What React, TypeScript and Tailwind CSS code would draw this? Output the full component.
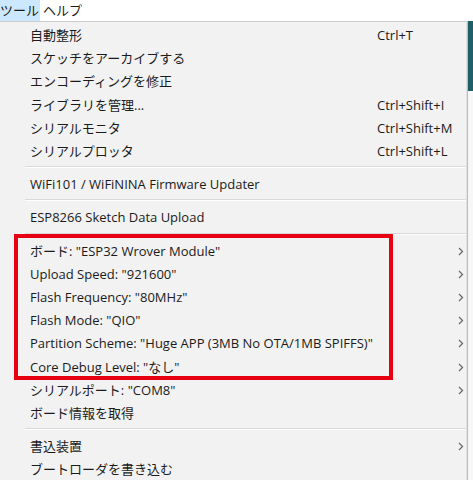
import React from 'react';

type Row =
  | { kind: 'item'; label: string; shortcut?: string; sub?: boolean }
  | { kind: 'sep' };

const topRows: Row[] = [
  { kind: 'item', label: '自動整形', shortcut: 'Ctrl+T' },
  { kind: 'item', label: 'スケッチをアーカイブする' },
  { kind: 'item', label: 'エンコーディングを修正' },
  { kind: 'item', label: 'ライブラリを管理...', shortcut: 'Ctrl+Shift+I' },
  { kind: 'item', label: 'シリアルモニタ', shortcut: 'Ctrl+Shift+M' },
  { kind: 'item', label: 'シリアルプロッタ', shortcut: 'Ctrl+Shift+L' },
  { kind: 'sep' },
  { kind: 'item', label: 'WiFi101 / WiFiNINA Firmware Updater' },
  { kind: 'sep' },
  { kind: 'item', label: 'ESP8266 Sketch Data Upload' },
  { kind: 'sep' },
];

const boardRows: Row[] = [
  { kind: 'item', label: 'ボード: "ESP32 Wrover Module"', sub: true },
  { kind: 'item', label: 'Upload Speed: "921600"', sub: true },
  { kind: 'item', label: 'Flash Frequency: "80MHz"', sub: true },
  { kind: 'item', label: 'Flash Mode: "QIO"', sub: true },
  { kind: 'item', label: 'Partition Scheme: "Huge APP (3MB No OTA/1MB SPIFFS)"', sub: true },
  { kind: 'item', label: 'Core Debug Level: "なし"', sub: true },
];

const bottomRows: Row[] = [
  { kind: 'item', label: 'シリアルポート: "COM8"', sub: true },
  { kind: 'item', label: 'ボード情報を取得' },
  { kind: 'sep' },
  { kind: 'item', label: '書込装置', sub: true },
  { kind: 'item', label: 'ブートローダを書き込む' },
];

function Chevron() {
  return (
    <svg width="6" height="9" viewBox="0 0 6 9" className="text-[#6b6b6b]">
      <path d="M1 1l3.5 3.5L1 8" fill="none" stroke="currentColor" strokeWidth="1.3" />
    </svg>
  );
}

function MenuRows({ rows }: { rows: Row[] }) {
  return (
    <>
      {rows.map((row, i) =>
        row.kind === 'sep' ? (
          <div key={i} className="h-[10px] pl-[25px] pt-[3px]">
            <div className="h-px bg-[#d9d9d9]" />
            <div className="h-px bg-white" />
          </div>
        ) : (
          <div key={i} className="h-[23.2px] flex items-center pl-[30px]">
            <span className="flex-1 whitespace-nowrap">{row.label}</span>
            <span className="w-[77px] whitespace-nowrap">{row.shortcut ?? ''}</span>
            <span className="w-[12px] flex items-center justify-end pr-[2px]">{row.sub && <Chevron />}</span>
          </div>
        )
      )}
    </>
  );
}

export default function App() {
  return (
    <div
      className="w-[473px] h-[480px] overflow-hidden bg-[#f2f2f2] text-[13px] text-[#1b1b1b] leading-none"
      style={{ fontFamily: '"Open Sans", "Noto Sans CJK JP", sans-serif' }}
    >
      <div className="h-[21px] bg-white flex items-center">
        <div className="h-full w-[40px] bg-[#cce8ff] flex items-center">
          <span className="whitespace-nowrap">ツール</span>
        </div>
        <span className="ml-[3px]">ヘルプ</span>
      </div>
      <div className="flex h-[459px]">
        <div className="w-[467px] border-t border-[#cccccc] border-r border-r-[#e2e2e2] pt-[2px]">
          <MenuRows rows={topRows} />
          <div className="relative">
            <div className="absolute left-[14px] w-[379px] -top-[6px] -bottom-[1px] border-4 border-[#e60012]" />
            <MenuRows rows={boardRows} />
          </div>
          <MenuRows rows={bottomRows} />
        </div>
        <div className="flex-1 flex flex-col border-l border-[#bdbdbd]">
          <div className="h-[70px] bg-[#1f5f66]" />
          <div className="flex-1 bg-[#f7f7f7]" />
        </div>
      </div>
    </div>
  );
}
